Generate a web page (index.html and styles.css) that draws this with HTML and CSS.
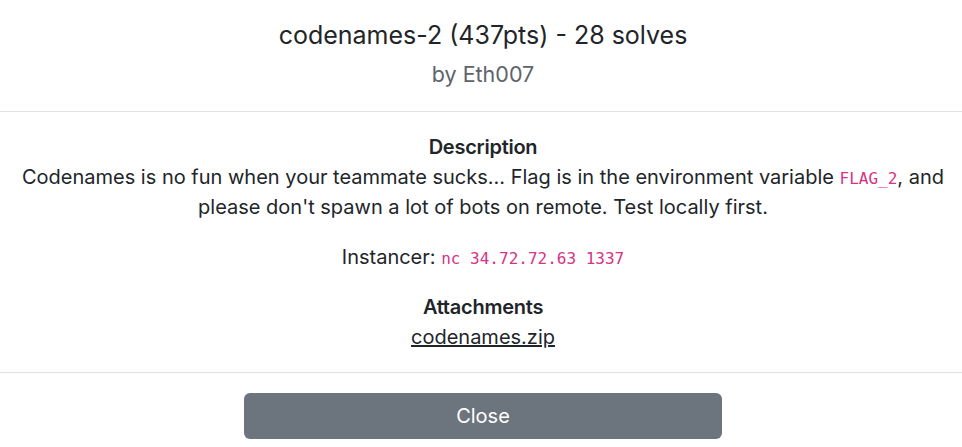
FILE: index.html
```html
<!DOCTYPE html>
<html>
<head>
<meta charset="utf-8">
<link rel="stylesheet" href="styles.css">
</head>
<body>
<div class="modal">
  <header class="modal-header">
    <h1 class="title">codenames-2 (437pts) - 28 solves</h1>
    <div class="author">by Eth007</div>
  </header>
  <section class="modal-body">
    <h2 class="label">Description</h2>
    <p>Codenames is no fun when your teammate sucks... Flag is in the environment variable <code>FLAG_2</code>, and please don't spawn a lot of bots on remote. Test locally first.</p>
    <p>Instancer: <code>nc 34.72.72.63 1337</code></p>
    <h2 class="label">Attachments</h2>
    <a class="attachment" href="#">codenames.zip</a>
  </section>
  <footer class="modal-footer">
    <button class="btn-close">Close</button>
  </footer>
</div>
</body>
</html>
```
FILE: styles.css
```css
html, body {
  margin: 0;
  padding: 0;
  background: #fff;
}
body {
  font-family: Inter, "Liberation Sans", sans-serif;
  font-size: 20px;
  line-height: 30px;
  color: #212529;
}
.modal {
  width: 962px;
}
.modal-header {
  padding: 20px 14px 22px 18px;
  text-align: center;
  border-bottom: 1px solid #dee2e6;
}
.title {
  margin: 0;
  font-size: 25px;
  font-weight: 400;
  line-height: 30px;
}
.author {
  margin-top: 9px;
  color: #5c636a;
  font-size: 21.5px;
  line-height: 30px;
}
.modal-body {
  padding: 20px 14px 20px 18px;
  text-align: center;
  border-bottom: 1px solid #dee2e6;
}
.label {
  margin: 0;
  font-size: 20px;
  font-weight: 600;
  line-height: 30px;
  letter-spacing: -0.25px;
}
p {
  margin: 0 0 20px;
}
code {
  font-family: "DejaVu Sans Mono", "Liberation Mono", monospace;
  font-size: 16px;
  line-height: 1;
  color: #d63384;
}
.attachment {
  color: #212529;
  text-decoration: underline;
}
.modal-footer {
  padding: 20px 14px 20px 18px;
  display: flex;
  justify-content: center;
}
.btn-close {
  width: 478px;
  height: 46px;
  background: #6c757d;
  color: #fff;
  border: none;
  border-radius: 6px;
  font-family: Inter, "Liberation Sans", sans-serif;
  font-size: 20px;
  line-height: 30px;
  padding: 8px 12px;
}
```
